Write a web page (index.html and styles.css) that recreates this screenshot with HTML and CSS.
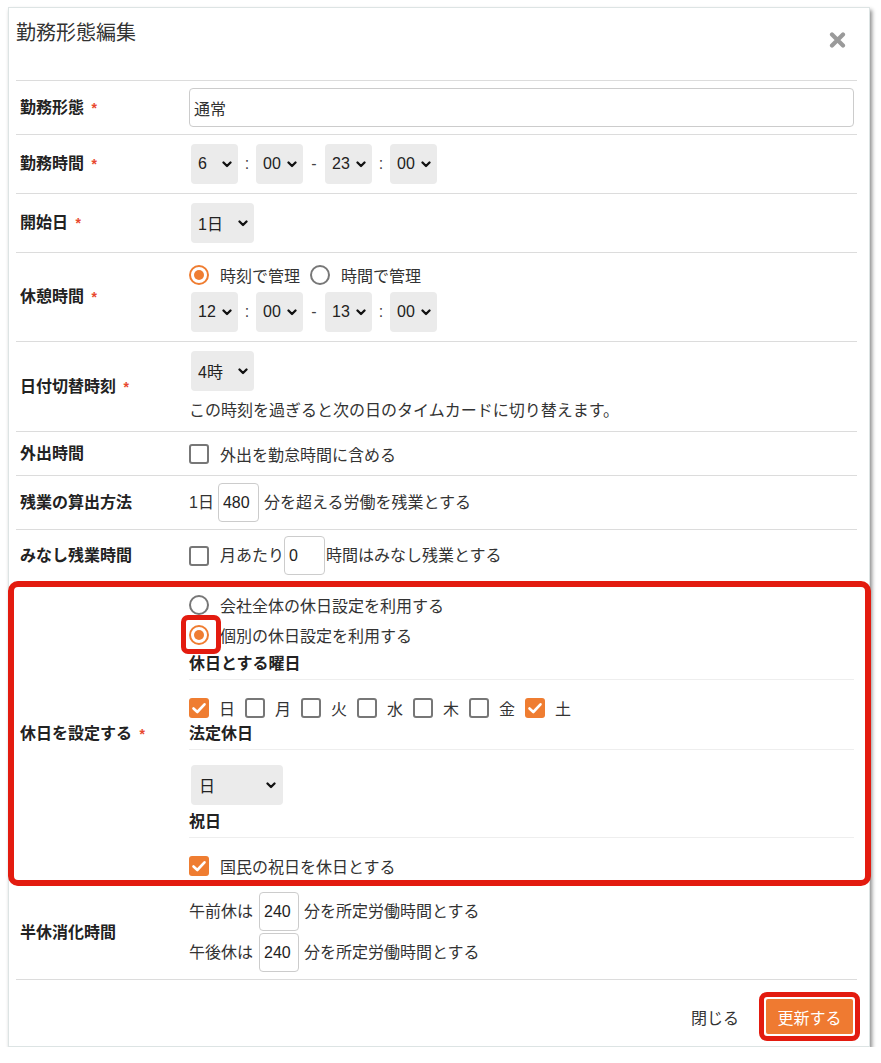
FILE: index.html
```html
<!DOCTYPE html>
<html lang="ja">
<head>
    <meta charset="UTF-8">
    <meta name="viewport" content="width=device-width, initial-scale=1.0">
    <title>勤務形態編集</title>
    <link rel="stylesheet" href="styles.css">
</head>
<body>

    <div class="modal">
        <!-- Header -->
        <div class="modal-head">
            <h2 class="modal-title">勤務形態編集</h2>
            <span class="close-icon">
                <svg width="17" height="16" viewBox="0 0 17 16"><path d="M3 2.5 L14 13.5 M14 2.5 L3 13.5" stroke="#9a9a9a" stroke-width="4.2" stroke-linecap="round"/></svg>
            </span>
        </div>

        <!-- 勤務形態 -->
        <div class="row">
            <div class="label">勤務形態 <span class="req">*</span></div>
            <div class="field pad-7">
                <input type="text" class="text-input" value="通常">
            </div>
        </div>

        <!-- 勤務時間 -->
        <div class="row">
            <div class="label">勤務時間 <span class="req">*</span></div>
            <div class="field pad-9">
                <div class="time-line">
                    <span class="sel sel-time">6<svg class="chev" width="10" height="7" viewBox="0 0 10 7"><path d="M1.5 1.5 L5 5 L8.5 1.5" fill="none" stroke="#111" stroke-width="2.3" stroke-linecap="round" stroke-linejoin="round"/></svg></span>
                    <span class="sep">:</span>
                    <span class="sel sel-time">00<svg class="chev" width="10" height="7" viewBox="0 0 10 7"><path d="M1.5 1.5 L5 5 L8.5 1.5" fill="none" stroke="#111" stroke-width="2.3" stroke-linecap="round" stroke-linejoin="round"/></svg></span>
                    <span class="sep sep-dash">-</span>
                    <span class="sel sel-time">23<svg class="chev" width="10" height="7" viewBox="0 0 10 7"><path d="M1.5 1.5 L5 5 L8.5 1.5" fill="none" stroke="#111" stroke-width="2.3" stroke-linecap="round" stroke-linejoin="round"/></svg></span>
                    <span class="sep">:</span>
                    <span class="sel sel-time">00<svg class="chev" width="10" height="7" viewBox="0 0 10 7"><path d="M1.5 1.5 L5 5 L8.5 1.5" fill="none" stroke="#111" stroke-width="2.3" stroke-linecap="round" stroke-linejoin="round"/></svg></span>
                </div>
            </div>
        </div>

        <!-- 開始日 -->
        <div class="row">
            <div class="label">開始日 <span class="req">*</span></div>
            <div class="field pad-9">
                <span class="sel sel-day">1日<svg class="chev" width="10" height="7" viewBox="0 0 10 7"><path d="M1.5 1.5 L5 5 L8.5 1.5" fill="none" stroke="#111" stroke-width="2.3" stroke-linecap="round" stroke-linejoin="round"/></svg></span>
            </div>
        </div>

        <!-- 休憩時間 -->
        <div class="row">
            <div class="label">休憩時間 <span class="req">*</span></div>
            <div class="field pad-9">
                <div class="opt-line">
                    <span class="rd on"></span><span class="opt-text">時刻で管理</span>
                    <span class="rd"></span><span class="opt-text">時間で管理</span>
                </div>
                <div class="time-line break-times">
                    <span class="sel sel-time">12<svg class="chev" width="10" height="7" viewBox="0 0 10 7"><path d="M1.5 1.5 L5 5 L8.5 1.5" fill="none" stroke="#111" stroke-width="2.3" stroke-linecap="round" stroke-linejoin="round"/></svg></span>
                    <span class="sep">:</span>
                    <span class="sel sel-time">00<svg class="chev" width="10" height="7" viewBox="0 0 10 7"><path d="M1.5 1.5 L5 5 L8.5 1.5" fill="none" stroke="#111" stroke-width="2.3" stroke-linecap="round" stroke-linejoin="round"/></svg></span>
                    <span class="sep sep-dash">-</span>
                    <span class="sel sel-time">13<svg class="chev" width="10" height="7" viewBox="0 0 10 7"><path d="M1.5 1.5 L5 5 L8.5 1.5" fill="none" stroke="#111" stroke-width="2.3" stroke-linecap="round" stroke-linejoin="round"/></svg></span>
                    <span class="sep">:</span>
                    <span class="sel sel-time">00<svg class="chev" width="10" height="7" viewBox="0 0 10 7"><path d="M1.5 1.5 L5 5 L8.5 1.5" fill="none" stroke="#111" stroke-width="2.3" stroke-linecap="round" stroke-linejoin="round"/></svg></span>
                </div>
            </div>
        </div>

        <!-- 日付切替時刻 -->
        <div class="row">
            <div class="label">日付切替時刻 <span class="req">*</span></div>
            <div class="field pad-note">
                <span class="sel sel-day">4時<svg class="chev" width="10" height="7" viewBox="0 0 10 7"><path d="M1.5 1.5 L5 5 L8.5 1.5" fill="none" stroke="#111" stroke-width="2.3" stroke-linecap="round" stroke-linejoin="round"/></svg></span>
                <p class="note">この時刻を過ぎると次の日のタイムカードに切り替えます。</p>
            </div>
        </div>

        <!-- 外出時間 -->
        <div class="row">
            <div class="label">外出時間</div>
            <div class="field pad-9">
                <div class="opt-line short">
                    <span class="cb"></span><span class="opt-text">外出を勤怠時間に含める</span>
                </div>
            </div>
        </div>

        <!-- 残業の算出方法 -->
        <div class="row">
            <div class="label">残業の算出方法</div>
            <div class="field pad-7">
                <div class="inline-line">
                    <span>1日</span>
                    <input type="text" class="num-input gap-l" value="480">
                    <span class="after">分を超える労働を残業とする</span>
                </div>
            </div>
        </div>

        <!-- みなし残業時間 -->
        <div class="row">
            <div class="label">みなし残業時間</div>
            <div class="field pad-6">
                <div class="inline-line">
                    <span class="cb"></span><span class="opt-text tight">月あたり</span>
                    <input type="text" class="num-input" value="0">
                    <span class="after-tight">時間はみなし残業とする</span>
                </div>
            </div>
        </div>

        <!-- 休日を設定する (highlighted) -->
        <div class="row row-marked">
            <div class="label">休日を設定する <span class="req">*</span></div>
            <div class="field pad-holiday">
                <div class="opt-line tall">
                    <span class="rd"></span><span class="opt-text">会社全体の休日設定を利用する</span>
                </div>
                <div class="opt-line tall">
                    <span class="rd on rd-marked"></span><span class="opt-text">個別の休日設定を利用する</span>
                </div>

                <div class="sub-head">休日とする曜日</div>
                <div class="opt-line days">
                    <span class="cb on"><svg width="20" height="20" viewBox="0 0 20 20"><path d="M4.5 10.5 L8.3 14 L15.5 6.3" fill="none" stroke="#fff" stroke-width="2.6" stroke-linecap="round" stroke-linejoin="round"/></svg></span><span class="day">日</span>
                    <span class="cb"></span><span class="day">月</span>
                    <span class="cb"></span><span class="day">火</span>
                    <span class="cb"></span><span class="day">水</span>
                    <span class="cb"></span><span class="day">木</span>
                    <span class="cb"></span><span class="day">金</span>
                    <span class="cb on"><svg width="20" height="20" viewBox="0 0 20 20"><path d="M4.5 10.5 L8.3 14 L15.5 6.3" fill="none" stroke="#fff" stroke-width="2.6" stroke-linecap="round" stroke-linejoin="round"/></svg></span><span class="day">土</span>
                </div>

                <div class="sub-head">法定休日</div>
                <span class="sel sel-wide legal">日<svg class="chev" width="10" height="7" viewBox="0 0 10 7"><path d="M1.5 1.5 L5 5 L8.5 1.5" fill="none" stroke="#111" stroke-width="2.3" stroke-linecap="round" stroke-linejoin="round"/></svg></span>

                <div class="sub-head">祝日</div>
                <div class="opt-line days">
                    <span class="cb on"><svg width="20" height="20" viewBox="0 0 20 20"><path d="M4.5 10.5 L8.3 14 L15.5 6.3" fill="none" stroke="#fff" stroke-width="2.6" stroke-linecap="round" stroke-linejoin="round"/></svg></span><span class="opt-text">国民の祝日を休日とする</span>
                </div>
            </div>
        </div>

        <!-- 半休消化時間 -->
        <div class="row">
            <div class="label">半休消化時間</div>
            <div class="field pad-half">
                <div class="inline-line">
                    <span>午前休は</span>
                    <input type="text" class="num-input gap-half" value="240">
                    <span class="after">分を所定労働時間とする</span>
                </div>
                <div class="inline-line second">
                    <span>午後休は</span>
                    <input type="text" class="num-input gap-half" value="240">
                    <span class="after">分を所定労働時間とする</span>
                </div>
            </div>
        </div>

        <!-- Footer -->
        <div class="modal-foot">
            <span class="btn-close">閉じる</span>
            <span class="btn-mark"><button class="btn-primary">更新する</button></span>
        </div>
    </div>

</body>
</html>
```

FILE: styles.css
```css
*, *::before, *::after {
    box-sizing: border-box;
}
body {
    margin: 0;
    background-color: #fff;
    font-family: "Liberation Sans", "Noto Sans CJK JP", sans-serif;
    font-size: 16px;
    color: #333;
}
.modal {
    width: 862px;
    margin: 7px 0 0 8px;
    padding: 0 12px 0 7px;
    background-color: #fff;
    border: 1px solid #dde4e4;
    box-shadow: 2px 3px 4px rgba(0, 0, 0, 0.45);
}
.modal-head {
    height: 72px;
    display: flex;
    justify-content: space-between;
    align-items: flex-start;
}
.modal-title {
    margin: 0;
    padding-top: 11px;
    font-size: 20px;
    font-weight: normal;
    line-height: 28px;
    color: #333;
}
.close-icon {
    margin: 24px 11px 0 0;
    display: flex;
}

/* form rows */
.row {
    display: grid;
    grid-template-columns: 169px 1fr;
    align-items: center;
    border-top: 1px solid #dcdcdc;
}
.label {
    padding-left: 4px;
    font-weight: bold;
    color: #222;
    line-height: 20px;
}
.req {
    color: #e8482f;
    font-size: 14px;
    margin-left: 3px;
}
.field {
    padding: 0 3px 0 4px;
}
.pad-6 { padding-top: 6px; padding-bottom: 6px; }
.pad-7 { padding-top: 7px; padding-bottom: 7px; }
.pad-9 { padding-top: 9px; padding-bottom: 9px; }
.pad-note { padding-top: 9px; padding-bottom: 8px; }
.pad-holiday { padding-top: 8px; padding-bottom: 7px; }
.pad-half { padding-top: 6px; padding-bottom: 7px; }

.text-input {
    width: 100%;
    height: 39px;
    border: 1px solid #ccc;
    border-radius: 4px;
    padding: 0 4px;
    font: inherit;
    color: #333;
}
.num-input {
    width: 41px;
    height: 39px;
    border: 1px solid #ccc;
    border-radius: 4px;
    padding: 0 4px;
    font: inherit;
    color: #222;
}
.num-input.gap-l { margin-left: 4px; }
.num-input.gap-half { margin-left: 6px; width: 40px; }
.after { margin-left: 5px; }
.after-tight { margin-left: 1px; }
.inline-line {
    display: flex;
    align-items: center;
    line-height: 24px;
}
.inline-line.second { margin-top: 2px; }

/* fake selects */
.sel {
    display: inline-flex;
    align-items: center;
    justify-content: space-between;
    height: 40px;
    margin-left: 2px;
    padding: 0 6px 0 7px;
    background-color: #ebebeb;
    border-radius: 4px;
    color: #222;
    vertical-align: top;
}
.sel-time { width: 47px; }
.sel-day { width: 63px; }
.sel-wide { width: 92px; padding-left: 8px; padding-right: 7px; }
.chev { flex-shrink: 0; }
.time-line {
    display: flex;
    align-items: center;
}
.sep {
    width: 18px;
    text-align: center;
    color: #444;
}
.sep-dash { width: 22px; }
.time-line .sel { margin-left: 0; }
.time-line .sel:first-child { margin-left: 2px; }
.break-times { margin-top: 4px; }
.note {
    margin: 8px 0 0;
    line-height: 24px;
}

/* radios and checkboxes */
.opt-line {
    display: flex;
    align-items: center;
    height: 26px;
}
.opt-line.short { height: 25px; }
.opt-line.tall { height: 30px; }
.opt-line.days { height: 24px; margin-top: 16px; }
.opt-text {
    margin-left: 11px;
    margin-right: 10px;
}
.opt-text.tight { margin-right: 0; }
.rd, .cb {
    display: inline-block;
    flex-shrink: 0;
    width: 20px;
    height: 20px;
    border: 2px solid #777;
}
.rd {
    border-radius: 50%;
    position: relative;
}
.rd.on {
    border-color: #ef7d31;
}
.rd.on::before {
    content: "";
    position: absolute;
    left: 3px;
    top: 3px;
    width: 10px;
    height: 10px;
    border-radius: 50%;
    background-color: #ef7d31;
}
.rd-marked::after {
    content: "";
    position: absolute;
    left: -10px;
    top: -12px;
    width: 40px;
    height: 39px;
    border: 5px solid #e31b0f;
    border-radius: 7px;
}
.cb {
    border-radius: 3px;
}
.cb.on {
    border: none;
    background-color: #ef7d31;
}
.cb svg { display: block; }
.day {
    margin-left: 10px;
    margin-right: 10px;
}
.sub-head {
    margin-top: 4px;
    padding-bottom: 5px;
    border-bottom: 1px solid #eee;
    font-weight: bold;
    color: #222;
    line-height: 20px;
}
.legal {
    margin-top: 15px;
    margin-bottom: 3px;
}

/* highlighted row */
.row-marked {
    position: relative;
}
.row-marked::after {
    content: "";
    position: absolute;
    left: -8px;
    right: -14px;
    top: -1px;
    bottom: -1px;
    border: 6px solid #e31b0f;
    border-radius: 10px;
    pointer-events: none;
}

/* footer */
.modal-foot {
    display: flex;
    justify-content: flex-end;
    align-items: center;
    padding: 12px 0 5px;
    border-top: 1px solid #dcdcdc;
}
.btn-close {
    margin-right: 20px;
    color: #333;
}
.btn-mark {
    display: flex;
    padding: 2px;
    margin-right: -3px;
    border: 5px solid #e31b0f;
    border-radius: 8px;
}
.btn-primary {
    width: 87px;
    height: 35px;
    border: none;
    border-radius: 2px;
    background-color: #ef7a31;
    color: #fff;
    font: inherit;
}
```
